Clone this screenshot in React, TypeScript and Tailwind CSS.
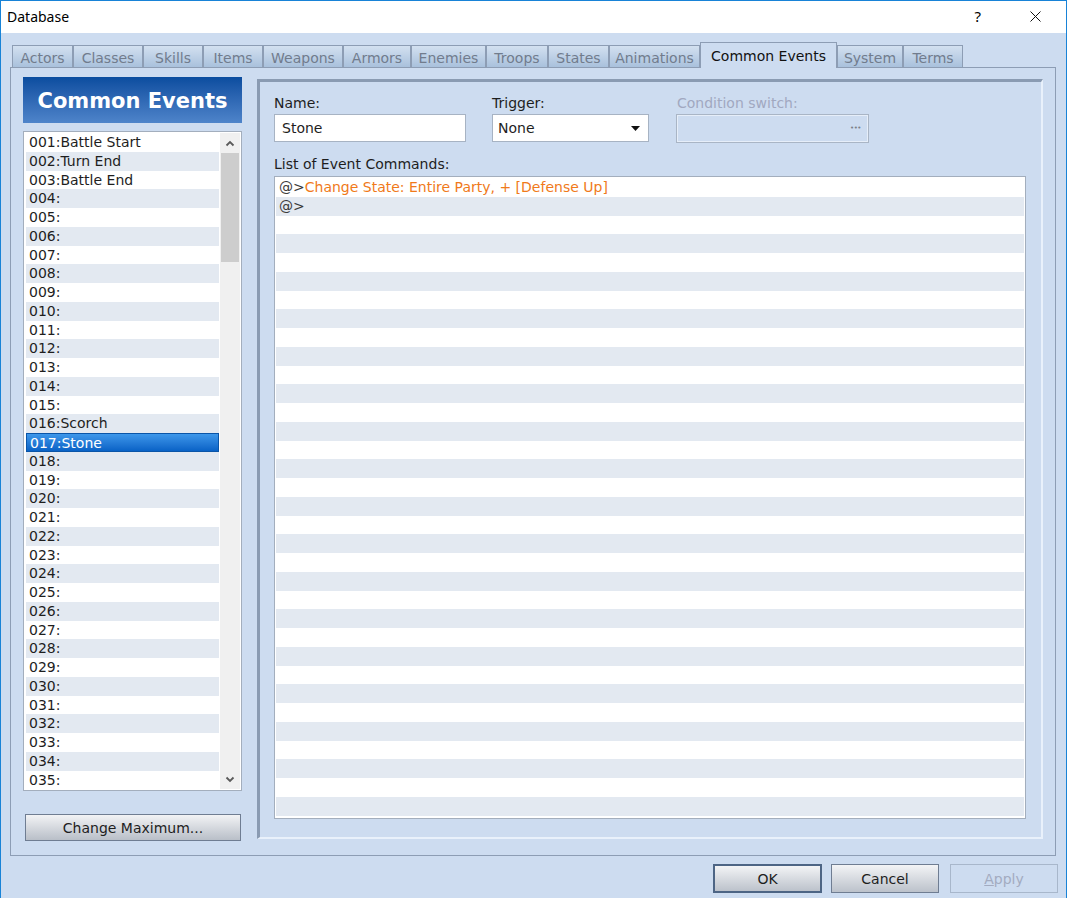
import React from 'react';

const TABS = [
  { label: 'Actors', w: 61 },
  { label: 'Classes', w: 70 },
  { label: 'Skills', w: 60 },
  { label: 'Items', w: 60 },
  { label: 'Weapons', w: 80 },
  { label: 'Armors', w: 68 },
  { label: 'Enemies', w: 75 },
  { label: 'Troops', w: 62 },
  { label: 'States', w: 61 },
  { label: 'Animations', w: 91 },
  { label: 'Common Events', w: 137, active: true },
  { label: 'System', w: 66 },
  { label: 'Terms', w: 60 },
];

const NAMES: Record<number, string> = {
  1: 'Battle Start',
  2: 'Turn End',
  3: 'Battle End',
  16: 'Scorch',
  17: 'Stone',
};

const events = Array.from({ length: 35 }).map((_, i) => {
  const id = String(i + 1).padStart(3, '0');
  return `${id}:${NAMES[i + 1] ?? ''}`;
});

const Chevron = ({ up }: { up?: boolean }) => (
  <svg width="10" height="7" viewBox="0 0 10 7">
    <path
      d={up ? 'M1.5 5.5 L5 2 L8.5 5.5' : 'M1.5 1.5 L5 5 L8.5 1.5'}
      fill="none"
      stroke="#5a5a5a"
      strokeWidth="1.8"
    />
  </svg>
);

const App: React.FC = () => {
  return (
    <div className="w-[1067px] h-[898px] border-x border-t border-[#1883d7] bg-[#cddcf0] flex flex-col overflow-hidden font-['DejaVu_Sans',Verdana,sans-serif] text-[14px] text-[#1e1e1e]">
      {/* Title bar */}
      <div className="h-[32px] bg-white flex items-center pl-[6px] shrink-0 font-['Noto_Sans',sans-serif]">
        <span className="text-[14px] text-black -mt-[1px]">Database</span>
        <span className="ml-auto mr-[49px] text-[15px] text-black -mt-[2px]">?</span>
        <svg width="11" height="11" viewBox="0 0 11 11" className="mr-[25px] -mt-[1px]">
          <path d="M0.5 0.5 L10.5 10.5 M10.5 0.5 L0.5 10.5" stroke="#111" strokeWidth="1" />
        </svg>
      </div>

      {/* Tabs */}
      <div className="h-[25px] mt-[9px] pl-[11px] flex items-end shrink-0 relative z-10">
        {TABS.map(t =>
          t.active ? (
            <div
              key={t.label}
              style={{ width: t.w }}
              className="h-[26px] -mb-[1px] pt-[1px] bg-[#cddcf0] border border-b-0 border-[#8d9db4] flex items-center justify-center text-[#111]"
            >
              {t.label}
            </div>
          ) : (
            <div
              key={t.label}
              style={{ width: t.w }}
              className="h-[22px] pt-[3px] bg-gradient-to-b from-[#d3e0f0] to-[#a9c1dc] border border-[#8d9db4] border-b-0 flex items-center justify-center text-[#717c8d]"
            >
              {t.label}
            </div>
          )
        )}
      </div>

      {/* Main panel */}
      <div className="ml-[9px] w-[1046px] h-[789px] border border-[#8d9db4] shrink-0 flex pl-[12px] pt-[9px]">
        {/* Left column */}
        <div className="w-[219px] flex flex-col">
          <div className="h-[46px] pt-[3px] bg-gradient-to-b from-[#0a4d9f] to-[#4e84ca] flex items-center justify-center text-white font-bold text-[21px]">
            Common Events
          </div>
          <div className="mt-[8px] h-[660px] bg-white border border-[#a3aebd] flex pl-[2px] pt-[1px]">
            <div className="w-[193px] flex flex-col">
              {events.map((e, i) => {
                const selected = i === 16;
                return (
                  <div
                    key={e}
                    className={`h-[18.75px] leading-[18.75px] pl-[3px] whitespace-nowrap ${
                      selected
                        ? 'bg-gradient-to-b from-[#3d97ea] to-[#0862c6] border border-[#0a55a8] text-white leading-[16.75px] pl-[2px]'
                        : i % 2 === 1
                        ? 'bg-[#e3e9f1]'
                        : 'bg-white'
                    }`}
                  >
                    {e}
                  </div>
                );
              })}
            </div>
            <div className="ml-[1px] w-[20px] h-[656px] bg-[#f0f0f0] flex flex-col items-center">
              <div className="h-[20px] w-full flex items-center justify-center">
                <Chevron up />
              </div>
              <div className="w-[18px] h-[109px] bg-[#cdcdcd]" />
              <div className="mt-auto h-[20px] w-full flex items-center justify-center">
                <Chevron />
              </div>
            </div>
          </div>
          <button className="mt-[23px] ml-[2px] w-[216px] h-[27px] pt-[1px] bg-gradient-to-b from-[#f2f3f5] to-[#b9bfc8] border border-[#6f7d92] text-[#1e1e1e] text-[14px]">
            Change Maximum...
          </button>
        </div>

        {/* Right group */}
        <div className="ml-[15px] mt-[2px] w-[786px] h-[760px] border-t-[3px] border-l-[3px] border-b-2 border-r-2 border-t-[#8a9bb2] border-l-[#8a9bb2] border-b-[#e9f1fb] border-r-[#e9f1fb] pl-[14px] pt-[12px]">
          <div className="flex">
            <div className="w-[192px]">
              <div className="h-[18px] leading-[18px]">Name:</div>
              <div className="mt-[2px] h-[28px] bg-white border border-[#a7b3c3] flex items-center pl-[7px]">
                Stone
              </div>
            </div>
            <div className="ml-[26px] w-[157px]">
              <div className="h-[18px] leading-[18px]">Trigger:</div>
              <div className="mt-[2px] h-[28px] bg-white border border-[#a7b3c3] flex items-center pl-[5px] pr-[8px]">
                <span>None</span>
                <svg width="9" height="5" viewBox="0 0 9 5" className="ml-auto">
                  <path d="M0 0 H9 L4.5 5 Z" fill="#111" />
                </svg>
              </div>
            </div>
            <div className="ml-[27px] w-[193px]">
              <div className="h-[18px] leading-[18px] pl-[1px] text-[#a1a8c0]">Condition switch:</div>
              <div className="mt-[2px] h-[29px] border border-[#a9b5c5]">
                <div className="w-full h-full border border-[#e6eef9] flex items-center justify-end pr-[6px]">
                  <span className="text-[7px] leading-none text-[#7a7f88] tracking-[-0.5px]">•••</span>
                </div>
              </div>
            </div>
          </div>

          <div className="mt-[12px] h-[18px] leading-[18px]">List of Event Commands:</div>
          <div className="mt-[3px] w-[752px] h-[643px] bg-white border border-[#a3aebd] p-[1px] overflow-hidden">
            {Array.from({ length: 34 }).map((_, i) => (
              <div
                key={i}
                className={`h-[18.75px] leading-[18.75px] pl-[3px] whitespace-nowrap ${
                  i % 2 === 1 ? 'bg-[#e3e9f1]' : 'bg-white'
                }`}
              >
                {i === 0 && (
                  <>
                    <span className="text-[#3a3a3a]">@&gt;</span>
                    <span className="text-[#f07a1a]">Change State: Entire Party, + [Defense Up]</span>
                  </>
                )}
                {i === 1 && <span className="text-[#3a3a3a]">@&gt;</span>}
              </div>
            ))}
          </div>
        </div>
      </div>

      {/* Bottom buttons */}
      <div className="mt-[8px] flex justify-end pr-[8px] text-[14px]">
        <button className="w-[109px] h-[29px] pt-[1px] bg-gradient-to-b from-[#f3f4f6] to-[#bcc2cb] border-2 border-[#4d6585] text-[#1e1e1e]">
          OK
        </button>
        <button className="ml-[9px] w-[108px] h-[29px] pt-[1px] bg-gradient-to-b from-[#f3f4f6] to-[#bcc2cb] border border-[#6f7d92] text-[#1e1e1e]">
          Cancel
        </button>
        <button className="ml-[11px] w-[108px] h-[29px] pt-[1px] border border-[#a8b7cb] text-[#a3abc0]">
          <span className="underline">A</span>pply
        </button>
      </div>
    </div>
  );
};

export default App;
